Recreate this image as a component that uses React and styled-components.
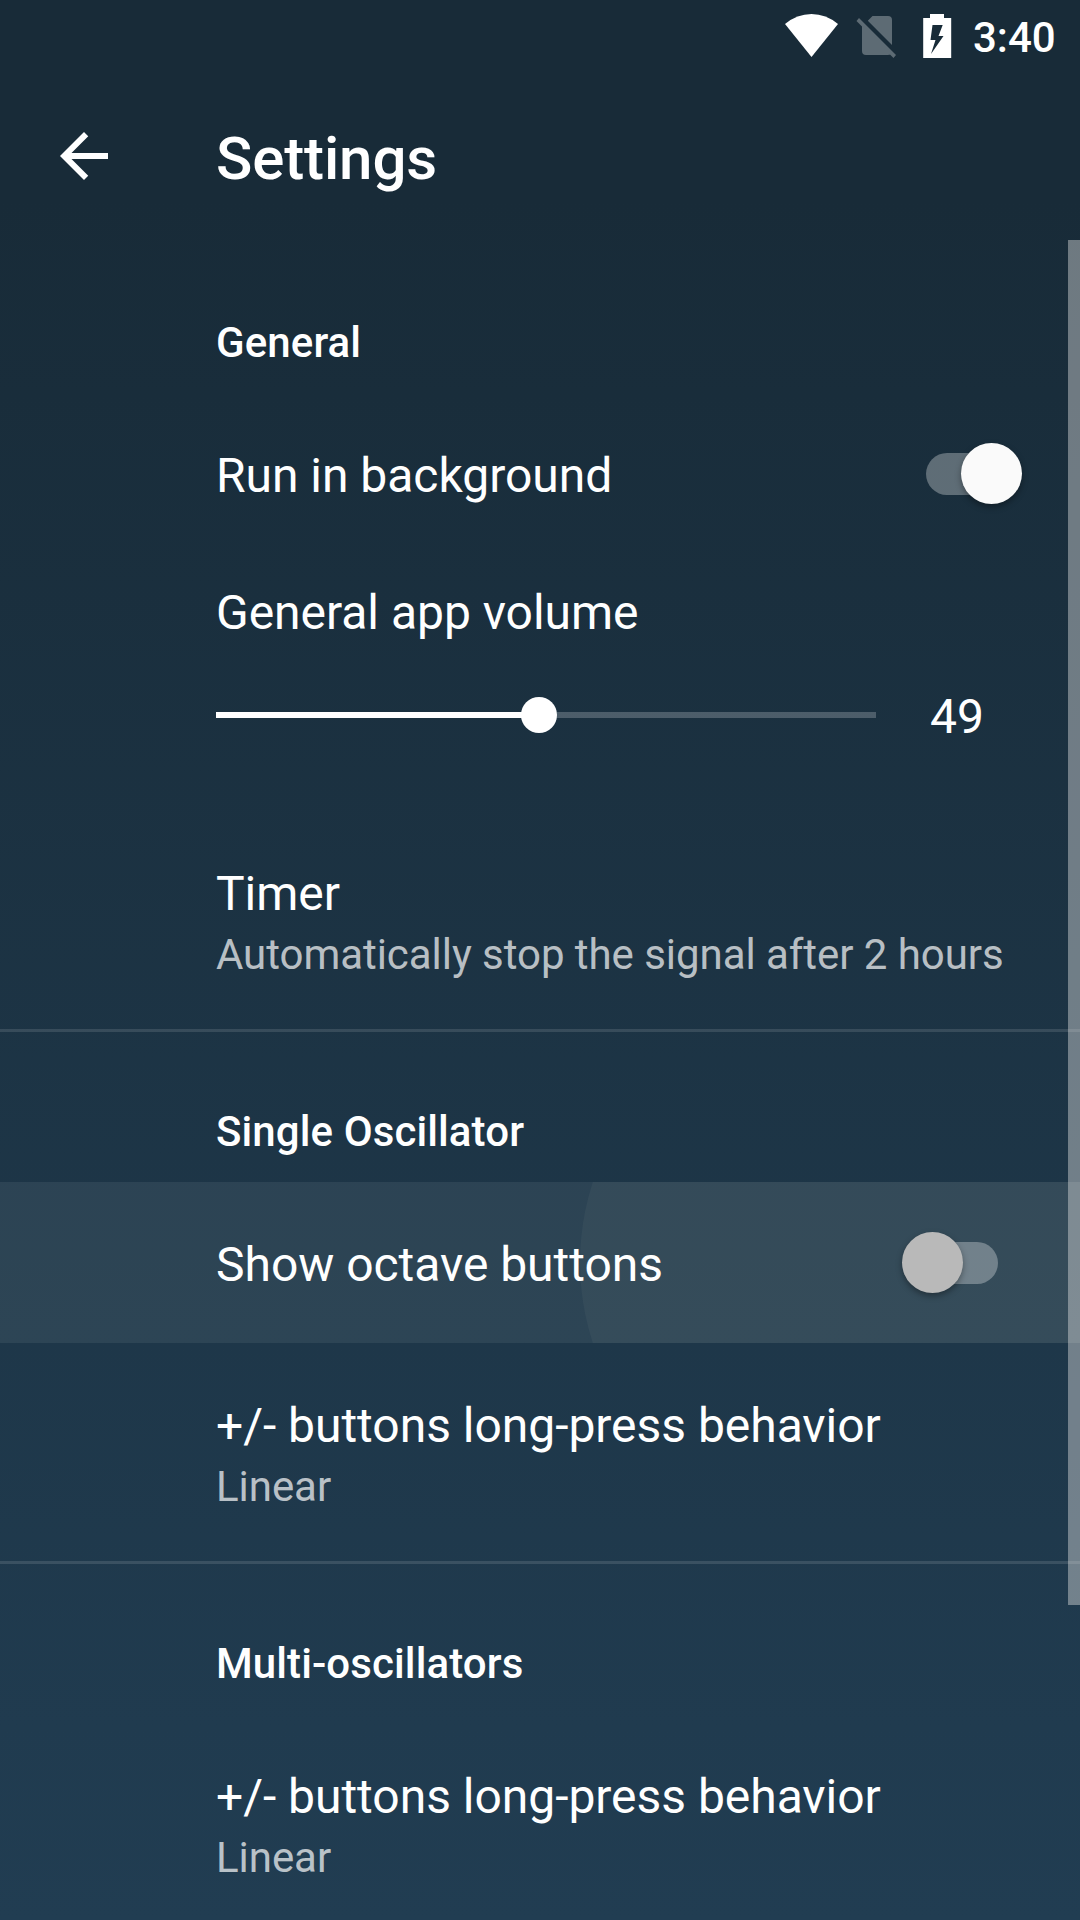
import React from "react";
import styled, { createGlobalStyle } from "styled-components";

const GlobalStyle = createGlobalStyle`
  * { box-sizing: border-box; }
  body { margin: 0; background: #182b38; }
`;

const Screen = styled.div`
  position: relative;
  display: flex;
  flex-direction: column;
  width: 1080px;
  height: 1920px;
  overflow: hidden;
  color: #fff;
  font-family: Roboto, "Noto Sans", sans-serif;
  background: linear-gradient(180deg, #182b38 0, #182b38 200px, #213d52 1920px);
`;

const StatusBar = styled.header`
  flex: none;
  display: flex;
  align-items: center;
  justify-content: flex-end;
  height: 72px;
  padding-right: 24px;
`;

const StatusIcon = styled.svg`
  flex: none;
  display: block;
  width: ${(p) => p.$width}px;
  height: 72px;
  fill: #fff;
`;

const Clock = styled.time`
  width: 84px;
  padding: 4px 0 0 1px;
  font-size: 42px;
  line-height: 48px;
  font-weight: 500;
  white-space: nowrap;
`;

const Toolbar = styled.div`
  flex: none;
  display: flex;
  align-items: center;
  height: 168px;
  padding-left: 48px;
`;

const BackButton = styled.button`
  width: 168px;
  height: 72px;
  padding: 0;
  border: 0;
  background: none;

  svg {
    display: block;
    width: 72px;
    height: 72px;
    fill: #fff;
  }
`;

const Title = styled.h1`
  margin: 0;
  padding-top: 6px;
  font-size: 60px;
  line-height: 70px;
  font-weight: 500;
  letter-spacing: -0.12px;
`;

const List = styled.main`
  flex: 1;
  min-height: 0;
  overflow: hidden;
`;

const Section = styled.section`
  border-top: 3px solid ${(p) => (p.$divided ? "rgba(255, 255, 255, 0.12)" : "transparent")};
`;

const Category = styled.h2`
  margin: 0;
  height: 150px;
  padding: 76px 0 0 216px;
  font-size: 42px;
  line-height: 48px;
  font-weight: 500;
  letter-spacing: 0.1px;
`;

const Row = styled.div`
  position: relative;
  display: flex;
  align-items: center;
  height: 161px;
  padding: 0 82px 0 216px;
  overflow: hidden;
  background: ${(p) => (p.$pressed ? "rgba(255, 255, 255, 0.07)" : "none")};
`;

const Ripple = styled.span`
  position: absolute;
  left: 580px;
  top: -179px;
  width: 519px;
  height: 519px;
  border-radius: 50%;
  background: rgba(255, 255, 220, 0.04);
`;

const Label = styled.div`
  position: relative;
  flex: 1;
  padding-top: 4px;
  font-size: 48px;
  line-height: 56px;
  letter-spacing: -0.03px;
  white-space: nowrap;
`;

const Track = styled.div`
  position: relative;
  flex: none;
  width: 72px;
  height: 42px;
  border-radius: 21px;
  background: rgba(255, 255, 255, 0.3);
`;

const Thumb = styled.span`
  position: absolute;
  top: -10px;
  left: ${(p) => (p.$on ? 35 : -24)}px;
  width: 61px;
  height: 61px;
  border-radius: 50%;
  background: ${(p) => (p.$on ? "#fafafa" : "#b9b9b9")};
  box-shadow: 0 3px 6px rgba(0, 0, 0, 0.35);
`;

const VolumeRow = styled.div`
  height: 257px;
  padding: 27px 0 0 216px;
`;

const SliderLine = styled.div`
  display: flex;
  align-items: center;
  gap: 54px;
  height: 56px;
  margin-top: 43px;
`;

const Rail = styled.div`
  position: relative;
  width: 660px;
  height: 6px;
  margin-top: 6px;
  background: rgba(255, 255, 255, 0.22);
`;

const RailFill = styled.div`
  height: 6px;
  background: #fff;
`;

const Knob = styled.span`
  position: absolute;
  top: -15px;
  width: 36px;
  height: 36px;
  margin-left: -18px;
  border-radius: 50%;
  background: #fff;
`;

const Value = styled.output`
  font-size: 48px;
  line-height: 56px;
  padding-top: 10px;
`;

const TextRow = styled.div`
  height: 218px;
  padding: 51px 0 0 216px;
`;

const Summary = styled.div`
  margin-top: 8px;
  font-size: 42px;
  line-height: 50px;
  letter-spacing: -0.05px;
  color: rgba(255, 255, 255, 0.7);
  white-space: nowrap;
`;

const Scrollbar = styled.div`
  position: absolute;
  top: 240px;
  right: 0;
  width: 12px;
  height: 1365px;
  background: rgba(224, 224, 224, 0.43);
`;

function SwitchRow({ label, on, pressed }) {
  return (
    <Row $pressed={pressed}>
      {pressed && <Ripple />}
      <Label>{label}</Label>
      <Track role="switch" aria-checked={on}>
        <Thumb $on={on} />
      </Track>
    </Row>
  );
}

function VolumeSlider({ label, value, position }) {
  return (
    <VolumeRow>
      <Label>{label}</Label>
      <SliderLine>
        <Rail>
          <RailFill style={{ width: `${position}%` }} />
          <Knob style={{ left: `${position}%` }} />
        </Rail>
        <Value>{value}</Value>
      </SliderLine>
    </VolumeRow>
  );
}

function SummaryRow({ label, summary }) {
  return (
    <TextRow>
      <Label>{label}</Label>
      <Summary>{summary}</Summary>
    </TextRow>
  );
}

export default function App() {
  return (
    <Screen>
      <GlobalStyle />
      <StatusBar>
        <StatusIcon $width={190} viewBox="782 0 190 72">
          <path d="M811.500 57 785 24Q797 14 811.500 14T838 24Z" />
          <path
            opacity="0.3"
            d="M872.500 16H888Q892 16 892 20V45L867.800 20.700ZM862 23.500 891.500 53Q890.500 55 888 55H866Q862 55 862 51ZM859 18 896 55 893.500 58 856.500 21Z"
          />
          <path
            fillRule="evenodd"
            d="M930 14H944V18H951.200V58H923.200V18H930ZM932.500 25 930.500 40H935.500L931 54 943.500 36H938.500L942.700 25Z"
          />
        </StatusIcon>
        <Clock>3:40</Clock>
      </StatusBar>
      <Toolbar>
        <BackButton aria-label="Back">
          <svg viewBox="0 0 24 24">
            <path d="M20 11H7.830l5.590-5.590L12 4l-8 8 8 8 1.410-1.410L7.830 13H20v-2z" />
          </svg>
        </BackButton>
        <Title>Settings</Title>
      </Toolbar>
      <List>
        <Section>
          <Category>General</Category>
          <SwitchRow label="Run in background" on />
          <VolumeSlider label="General app volume" value={49} position={49} />
          <SummaryRow label="Timer" summary="Automatically stop the signal after 2 hours" />
        </Section>
        <Section $divided>
          <Category>Single Oscillator</Category>
          <SwitchRow label="Show octave buttons" on={false} pressed />
          <SummaryRow label="+/- buttons long-press behavior" summary="Linear" />
        </Section>
        <Section $divided>
          <Category>Multi-oscillators</Category>
          <SummaryRow label="+/- buttons long-press behavior" summary="Linear" />
        </Section>
      </List>
      <Scrollbar />
    </Screen>
  );
}
